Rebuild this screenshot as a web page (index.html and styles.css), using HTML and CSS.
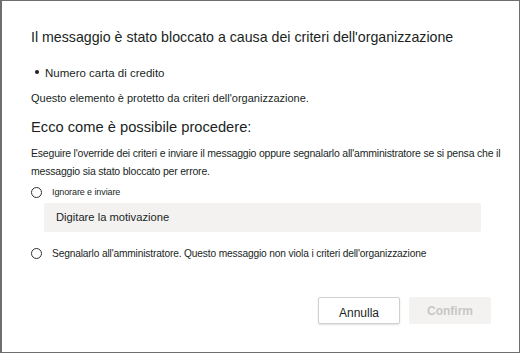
FILE: index.html
```html
<!DOCTYPE html>
<html lang="it">
  <head>
    <meta charset="UTF-8" />
    <meta name="viewport" content="width=device-width, initial-scale=1.0" />
    <title>Messaggio bloccato</title>
    <link rel="stylesheet" href="styles.css">
  </head>
  <body>
    <div class="dialog">
      <h1 class="title">Il messaggio è stato bloccato a causa dei criteri dell'organizzazione</h1>
      <ul class="matches">
        <li>Numero carta di credito</li>
      </ul>
      <p class="protected">Questo elemento è protetto da criteri dell'organizzazione.</p>
      <h2 class="subtitle">Ecco come è possibile procedere:</h2>
      <p class="desc">Eseguire l'override dei criteri e inviare il messaggio oppure segnalarlo all'amministratore se si pensa che il messaggio sia stato bloccato per errore.</p>
      <label class="option">
        <span class="radio"></span>
        <span class="option-small">Ignorare e inviare</span>
      </label>
      <div class="reason">Digitare la motivazione</div>
      <label class="option option-report">
        <span class="radio"></span>
        <span>Segnalarlo all'amministratore. Questo messaggio non viola i criteri dell'organizzazione</span>
      </label>
      <div class="actions">
        <button class="btn btn-cancel">Annulla</button>
        <button class="btn btn-confirm" disabled>Confirm</button>
      </div>
    </div>
  </body>
</html>
```

FILE: styles.css
```css
html,
body {
  margin: 0;
  padding: 0;
}

body {
  font-family: "Liberation Sans", Arial, sans-serif;
  color: #201f1e;
  background: #fff;
}

.dialog {
  box-sizing: border-box;
  width: 520px;
  height: 353px;
  border: 1px solid #6e6e6e;
  border-left-width: 2px;
  padding: 26px 10px 0 29px;
}

.title {
  margin: 0;
  font-size: 14.2px;
  font-weight: normal;
  line-height: 20px;
}

.matches {
  margin: 18px 0 0;
  padding: 0 0 0 14px;
  font-size: 11.5px;
  line-height: 16px;
  list-style: none;
}

.matches li {
  position: relative;
}

.matches li::before {
  content: "";
  position: absolute;
  left: -10px;
  top: 5px;
  width: 4px;
  height: 4px;
  border-radius: 50%;
  background: #201f1e;
}

.protected {
  margin: 9px 0 0;
  font-size: 11px;
  line-height: 16px;
}

.subtitle {
  margin: 11px 0 0;
  font-size: 14.7px;
  font-weight: normal;
  line-height: 20px;
}

.desc {
  margin: 7px 0 0;
  font-size: 10.5px;
  letter-spacing: -0.2px;
  line-height: 18px;
}

.option {
  display: flex;
  align-items: center;
  margin-top: 4px;
  height: 16px;
  font-size: 10.2px;
  letter-spacing: -0.15px;
}

.option-small {
  font-size: 9px;
  letter-spacing: -0.1px;
}

.radio {
  box-sizing: border-box;
  width: 11px;
  height: 11px;
  margin-right: 10px;
  border: 1px solid #323130;
  border-radius: 50%;
  flex: none;
}

.reason {
  box-sizing: border-box;
  margin: 3px 0 0 13px;
  width: 437px;
  height: 29px;
  padding-left: 12px;
  background: #f3f2f1;
  border-radius: 2px;
  font-size: 11.2px;
  line-height: 29px;
}

.option-report {
  margin-top: 13px;
}

.actions {
  display: flex;
  justify-content: flex-end;
  gap: 9px;
  margin: 36px 18px 0 0;
}

.btn {
  box-sizing: border-box;
  width: 82px;
  height: 27px;
  padding: 0;
  font-family: inherit;
  font-size: 12px;
  border-radius: 2px;
}

.btn-cancel {
  background: #fff;
  color: #201f1e;
  border: 1px solid #d2d0ce;
  box-shadow: 0 1px 2px rgba(0, 0, 0, 0.12);
  padding-top: 4px;
}

.btn-confirm {
  background: #f3f2f1;
  color: #c8c6c4;
  border: 1px solid #f3f2f1;
  font-weight: bold;
}
```
